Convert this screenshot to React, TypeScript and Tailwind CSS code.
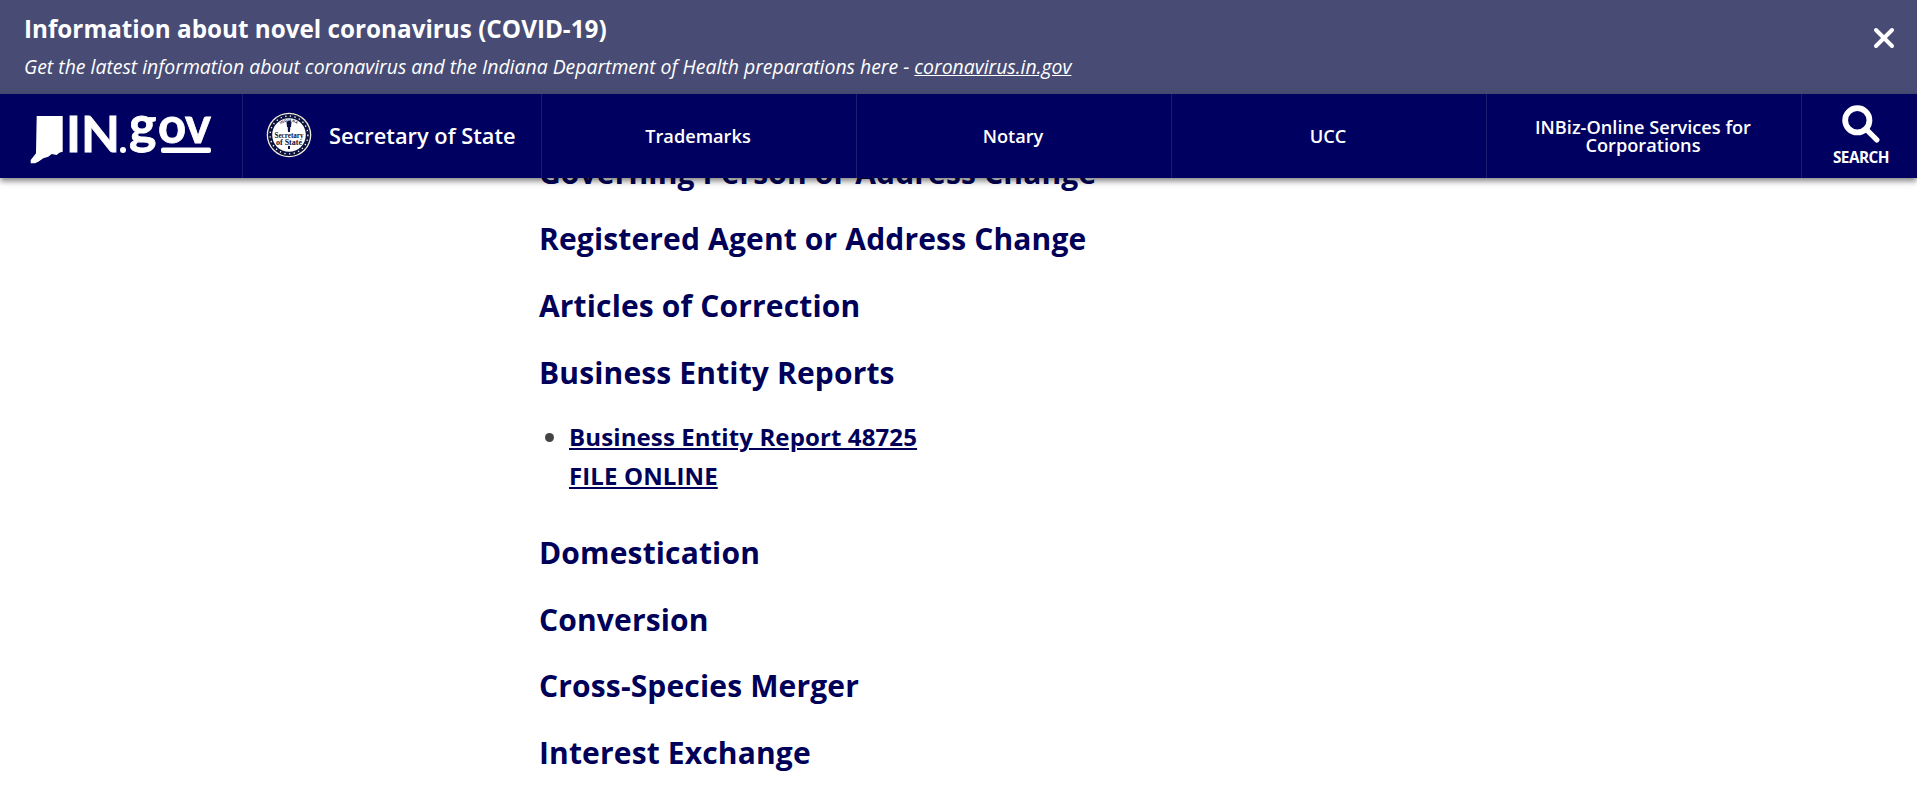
import { X } from "lucide-react";

const NAV_ITEMS = ["Trademarks", "Notary", "UCC", "INBiz-Online Services for Corporations"];

const HEADINGS_TOP = ["Governing Person or Address Change", "Registered Agent or Address Change", "Articles of Correction", "Business Entity Reports"];
const HEADINGS_BOTTOM = ["Domestication", "Conversion", "Cross-Species Merger", "Interest Exchange"];

function Logo() {
  return (
    <svg viewBox="0 0 190 60" className="w-[190px] h-[60px] fill-white overflow-visible" fontFamily="Lato, sans-serif" fontWeight="700" stroke="#ffffff" strokeWidth="0.8">
      <path stroke="none" d="M12.7 10 L38.7 10 L38.7 45.7 L35.3 46.7 L32.7 49 L27.7 48 L24.3 50.7 L19.3 52.3 L14.3 55.7 L11 57.3 L6.7 57.3 L6.7 54 L9.3 50.7 L12 47.3 Z" />
      <text x="42" y="46" fontSize="49" textLength="54" lengthAdjust="spacingAndGlyphs">IN</text>
      <circle cx="99" cy="44" r="3" stroke="none" />
      <text x="105" y="37" fontSize="52">g</text>
      <text x="134" y="37" fontSize="49">o</text>
      <text x="161" y="37" fontSize="49">v</text>
      <rect x="137" y="41.5" width="50" height="5.5" rx="2" stroke="none" />
    </svg>
  );
}

function Seal() {
  return (
    <svg viewBox="0 0 46 46" className="w-[46px] h-[46px]">
      <defs>
        <path id="seal-arc" d="M9.5 23 A13.5 13.5 0 0 1 36.5 23" />
      </defs>
      <circle cx="23" cy="23" r="22.3" fill="#f3ecd8" />
      <circle cx="23" cy="23" r="21" fill="#0b1240" />
      <circle cx="23" cy="23" r="16.8" fill="#ffffff" />
      <circle cx="23" cy="23" r="18.9" fill="none" stroke="#ffffff" strokeWidth="1.3" strokeDasharray="1.3 3.4" />
      <text fontSize="3.6" fontWeight="700" fontFamily="'Liberation Sans', sans-serif" fill="#0b1240" textAnchor="middle" letterSpacing="0.4">
        <textPath href="#seal-arc" startOffset="50%">INDIANA</textPath>
      </text>
      <path d="M20.5 10 Q23 7.5 25.5 10 L25 15 L24.3 15 L24 20 L22 20 L21.7 15 L21 15 Z" fill="#0b1240" />
      <text x="23" y="25.5" textAnchor="middle" fontSize="8" fontFamily="'Liberation Serif', serif" fontWeight="700" fill="#0b1240" textLength="29" lengthAdjust="spacingAndGlyphs">Secretary</text>
      <text x="23" y="32.5" textAnchor="middle" fontSize="8" fontFamily="'Liberation Serif', serif" fontWeight="700" fill="#0b1240">of State</text>
      <rect x="22" y="34" width="2" height="3" fill="#0b1240" />
    </svg>
  );
}

function SearchGlyph() {
  return (
    <svg viewBox="0 0 36 36" className="w-[38px] h-[38px]" fill="none" stroke="#ffffff">
      <circle cx="14.5" cy="14.5" r="11.5" strokeWidth="5.5" />
      <path d="M23 23 L33 33" strokeWidth="5" strokeLinecap="round" />
    </svg>
  );
}

export default function App() {
  return (
    <div className="relative h-[798px] overflow-hidden bg-white font-['Open_Sans',sans-serif]">

      {/* Banner + header sit over the scrolled page */}
      <div className="absolute inset-x-0 top-0 z-10">
        <div className="h-[94px] bg-[#484c75] text-white pl-[24px] pr-[17px] flex items-start justify-between">
          <div>
            <div className="text-[24.25px] leading-[32px] font-bold mt-[13px]">Information about novel coronavirus (COVID-19)</div>
            <div className="text-[19.4px] leading-[26px] italic mt-[9px]">
              Get the latest information about coronavirus and the Indiana Department of Health preparations here - <span className="underline">coronavirus.in.gov</span>
            </div>
          </div>
          <X className="w-[32px] h-[32px] mt-[22px]" strokeWidth={3} />
        </div>

        <div className="h-[84px] bg-[#000060] text-white flex shadow-[0_3px_6px_rgba(0,0,0,0.5)]">
          <div className="w-[243px] shrink-0 border-r border-[#1c1c72] flex items-center pl-[24px]">
            <Logo />
          </div>
          <div className="w-[298px] shrink-0 flex items-center pl-[23px] pb-[2px]">
            <Seal />
            <span className="ml-[17px] mt-[2px] text-[21.8px] font-semibold whitespace-nowrap">Secretary of State</span>
          </div>
          {NAV_ITEMS.map((item) => (
            <div key={item} className="w-[315px] shrink-0 border-l border-[#1c1c72] flex items-center justify-center text-center pl-[39px] pr-[41px] text-[18.2px] leading-[18px] font-semibold">
              {item}
            </div>
          ))}
          <div className="flex-1 border-l border-[#1c1c72] flex flex-col items-center pt-[11px] pl-[3px]">
            <SearchGlyph />
            <span className="text-[15.3px] leading-[20px] font-bold -tracking-[0.5px] mt-[4px]">SEARCH</span>
          </div>
        </div>
      </div>

      {/* Page content, scrolled so the first heading is cut by the header */}
      <div className="pl-[539px] pt-[149.5px] text-[#000058]">
        <div className="flex flex-col gap-[20px]">
          {HEADINGS_TOP.map((h) => (
            <h3 key={h} className="text-[30px] leading-[46.7px] font-bold tracking-[0.15px]">{h}</h3>
          ))}
        </div>
        <ul className="mt-[21px] pl-[30px] list-disc marker:text-[#444444] text-[24px] leading-[39px] font-bold tracking-[0.12px]">
          <li>
            <span className="underline">Business Entity Report 48725</span>
            <br />
            <span className="underline">FILE ONLINE</span>
          </li>
        </ul>
        <div className="mt-[34.5px] flex flex-col gap-[20px]">
          {HEADINGS_BOTTOM.map((h) => (
            <h3 key={h} className="text-[30px] leading-[46.7px] font-bold tracking-[0.15px]">{h}</h3>
          ))}
        </div>
      </div>
    </div>
  );
}
